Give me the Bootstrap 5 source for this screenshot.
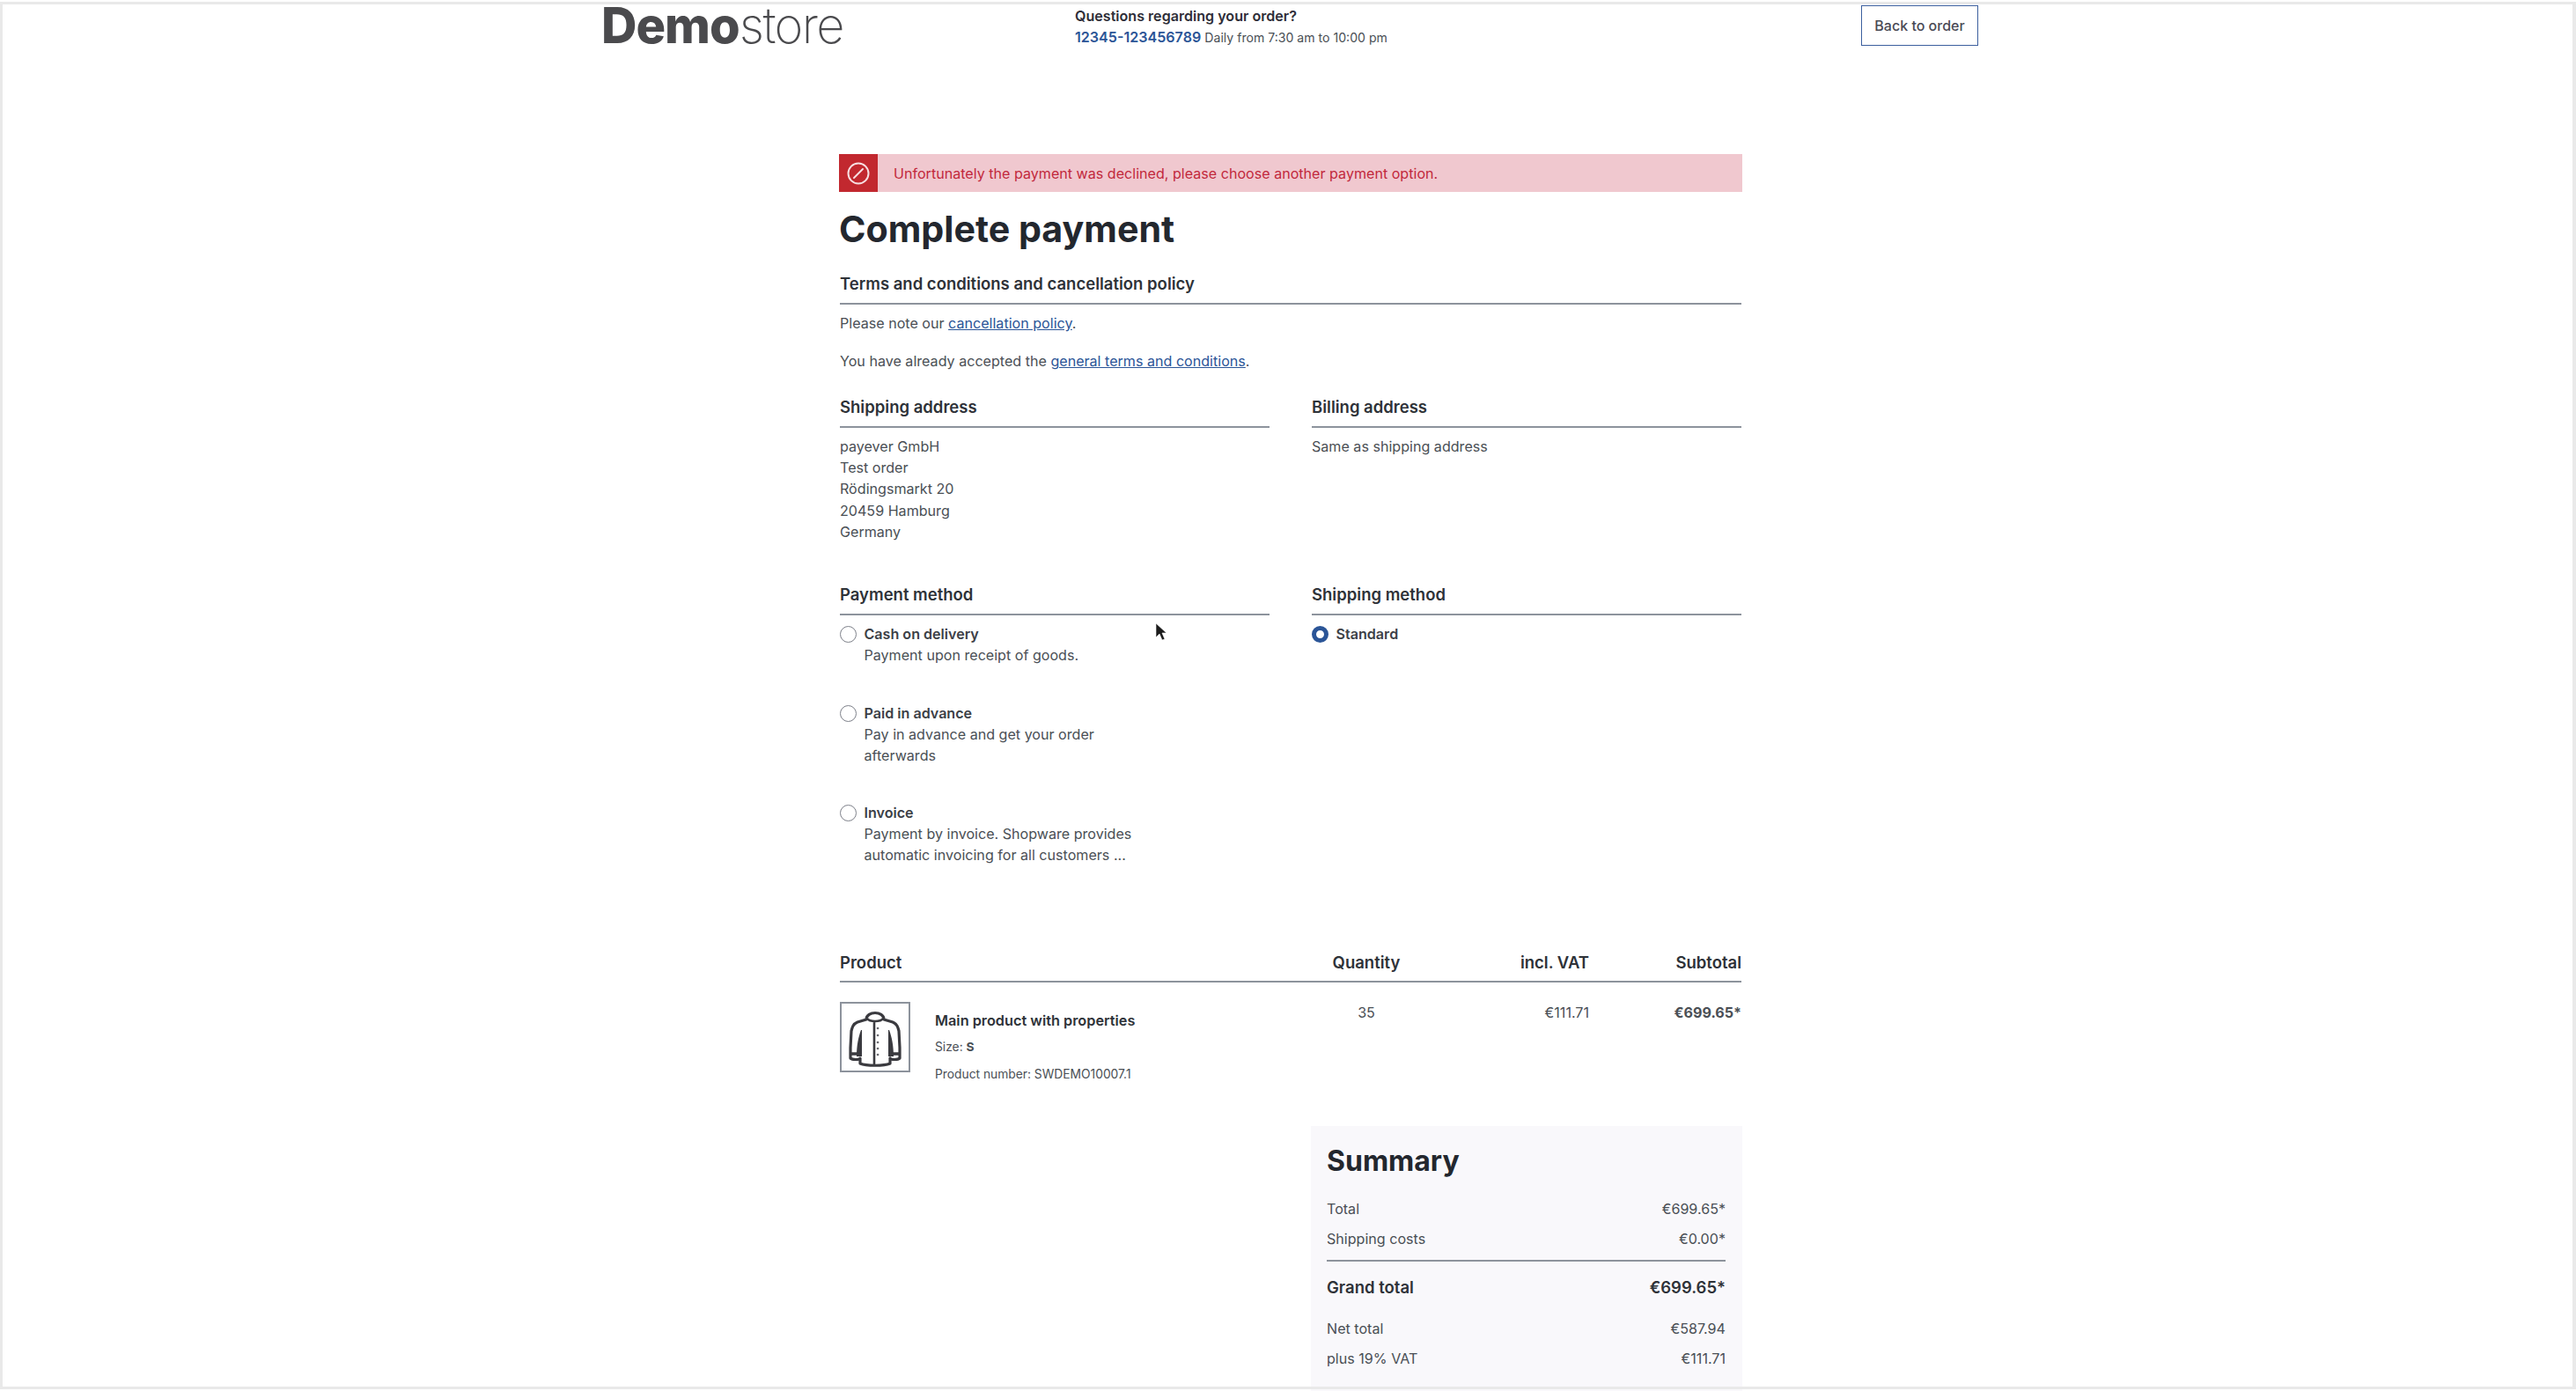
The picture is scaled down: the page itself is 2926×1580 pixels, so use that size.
<!DOCTYPE html>
<html lang="en">
<head>
  <meta charset="UTF-8" />
  <title>Complete payment</title>
  <link href="https://cdn.jsdelivr.net/npm/bootstrap@5.3.0/dist/css/bootstrap.min.css" rel="stylesheet" />
  <style>
    html, body { height: 100%; overflow: hidden; }
    body { font-family: Inter, "Liberation Sans", sans-serif; font-size: 16.1px; line-height: 24px; color: #4a4f55; background: #fff; }
    a { color: #2b5597; }
    .page-frame { position: fixed; inset: 2px 0; border-style: solid; border-color: #e9e9e9; border-width: 3px 4px 3px 3px; pointer-events: none; z-index: 5; }
    .mouse-arrow { position: fixed; left: 1311px; top: 706px; z-index: 6; }
    .shop-head { width: 1564px; margin-left: 683px; height: 175px; padding-top: 6px; }
    .shop-logo { width: 538px; font-size: 56px; line-height: 46px; font-weight: 800; color: #4a4a4d; letter-spacing: -1px; }
    .shop-logo span { font-weight: 200; letter-spacing: -1.6px; }
    .shop-help { line-height: 24px; color: #2e2e38; font-weight: 600; }
    .shop-help small { font-size: 14.1px; font-weight: 400; color: #4a4f55; }
    .shop-help a { text-decoration: none; }
    .back-btn { margin-left: auto; width: 133px; height: 46px; padding: 0; border: 1.5px solid #3b5f9e; border-radius: 0; font-size: 16px; font-weight: 500; color: #4a4a55; background: #fff; }
    .pay-main { width: 1026px; margin-left: 953px; }
    .pay-body { padding: 0 1px; }
    .pay-alert { height: 43px; background: #f0c8cf; color: #c2283c; }
    .pay-alert-icon { width: 44px; background: #c2282f; }
    .pay-alert-text { padding-left: 18px; }
    h1.pay-title { font-size: 41.2px; line-height: 48px; font-weight: 700; color: #23272e; margin: 18px 0 0; }
    .sect-title { font-size: 18.5px; line-height: 24px; font-weight: 600; color: #2e3238; padding-bottom: 10px; border-bottom: 2px solid #8d939c; margin-bottom: 9px; }
    .pay-body p { margin-bottom: 19px; }
    .terms-block { padding-top: 26px; }
    .two-cols { display: grid; grid-template-columns: 488px 488px; column-gap: 48px; margin-top: 28px; }
    .addr-lines { margin-bottom: 47px; line-height: 24.2px; }
    .radio-dot { width: 19px; height: 19px; flex: none; border: 1.5px solid #7d8089; border-radius: 50%; margin-top: 3px; background: #fff; }
    .radio-dot.is-on { border: 5px solid #2b5597; }
    .radio-row { gap: 8.5px; margin-bottom: 41.5px; }
    .radio-row strong { font-weight: 600; color: #3c4046; display: block; }
    .radio-desc { width: 325px; }
    .items-head { margin-top: 56px; padding-bottom: 9px; border-bottom: 2px solid #8d939c; font-size: 18.5px; font-weight: 600; color: #2e3238; }
    .item-row { padding-top: 22px; }
    .col-product { width: 553px; flex: none; }
    .col-qty { width: 90px; flex: none; text-align: center; }
    .col-vat { width: 208px; flex: none; text-align: right; }
    .col-sub { flex: 1; text-align: right; }
    .thumb-box { width: 80px; height: 80px; border: 2px solid #8d939c; flex: none; }
    .thumb-box svg { display: block; width: 76px; height: 76px; }
    .item-info { margin-left: 28px; padding-top: 6px; padding-bottom: 2px; font-size: 13.8px; line-height: 30.5px; }
    .item-info strong { font-size: 16.3px; font-weight: 600; color: #2e3238; display: block; }
    .sum-box { width: 490px; margin-left: 535px; margin-top: 42px; padding: 16px 19px 60px 18px; background: #f9f8fb; }
    .sum-box h2 { font-size: 32px; line-height: 48px; font-weight: 700; color: #23272e; margin: 0 0 18px; }
    .sum-row { height: 33.5px; }
    .sum-grand { font-size: 18.5px; font-weight: 600; color: #2e3238; border-top: 2px solid #8d939c; padding-top: 17px; margin-top: 3px; margin-bottom: 20px; height: 46px; }
  </style>
</head>
<body>
  <div class="page-frame"></div>
  <svg class="mouse-arrow" width="16" height="24" viewBox="0 0 16 24"><path d="M2 2v16l4-4 3 7 3-1-3-7h5z" fill="#1c1c1c" stroke="#fff" stroke-width=".6"/></svg>

  <header class="shop-head d-flex align-items-start">
    <div class="shop-logo">Demo<span>store</span></div>
    <div class="shop-help">
      <div>Questions regarding your order?</div>
      <div><a href="#">12345-123456789</a> <small>Daily from 7:30 am to 10:00 pm</small></div>
    </div>
    <button class="btn back-btn" type="button">Back to order</button>
  </header>

  <main class="pay-main">
    <div class="pay-alert d-flex align-items-stretch">
      <div class="pay-alert-icon d-flex align-items-center justify-content-center">
        <svg width="26" height="26" viewBox="0 0 26 26" fill="none" stroke="#f7dfe2" stroke-width="2"><circle cx="13" cy="13" r="11.5"/><path d="M8 18 18 8" stroke-linecap="round"/></svg>
      </div>
      <div class="pay-alert-text d-flex align-items-center">Unfortunately the payment was declined, please choose another payment option.</div>
    </div>

    <h1 class="pay-title">Complete payment</h1>

    <div class="pay-body">
      <div class="terms-block">
        <div class="sect-title">Terms and conditions and cancellation policy</div>
        <p>Please note our <a href="#">cancellation policy</a>.</p>
        <p>You have already accepted the <a href="#">general terms and conditions</a>.</p>
      </div>

      <div class="two-cols">
        <div>
          <div class="sect-title">Shipping address</div>
          <div class="addr-lines">payever GmbH<br />Test order<br />Rödingsmarkt 20<br />20459 Hamburg<br />Germany</div>
        </div>
        <div>
          <div class="sect-title">Billing address</div>
          <div>Same as shipping address</div>
        </div>
        <div>
          <div class="sect-title">Payment method</div>
          <div class="radio-row d-flex">
            <span class="radio-dot"></span>
            <div class="radio-desc"><strong>Cash on delivery</strong>Payment upon receipt of goods.</div>
          </div>
          <div class="radio-row d-flex">
            <span class="radio-dot"></span>
            <div class="radio-desc"><strong>Paid in advance</strong>Pay in advance and get your order afterwards</div>
          </div>
          <div class="radio-row d-flex">
            <span class="radio-dot"></span>
            <div class="radio-desc"><strong>Invoice</strong>Payment by invoice. Shopware provides automatic invoicing for all customers ...</div>
          </div>
        </div>
        <div>
          <div class="sect-title">Shipping method</div>
          <div class="radio-row d-flex">
            <span class="radio-dot is-on"></span>
            <div><strong>Standard</strong></div>
          </div>
        </div>
      </div>

      <div class="items-head d-flex">
        <div class="col-product">Product</div>
        <div class="col-qty">Quantity</div>
        <div class="col-vat">incl. VAT</div>
        <div class="col-sub">Subtotal</div>
      </div>
      <div class="item-row d-flex">
        <div class="col-product d-flex">
          <div class="thumb-box">
            <svg viewBox="2 2 76 76" fill="none" stroke="#3a3a3f" stroke-width="3.2" stroke-linejoin="round">
              <path d="M30 20C30 10 50 10 50 20L60 23C65 25 66 29 67 33L68 52V64C66 66 58 66 57 64V70C50 73 30 73 23 70V64C22 66 14 66 12 64V52L13 33C14 29 15 25 20 23Z"/>
              <path d="M31 19C34 23 46 23 49 19M39 21V71" stroke-width="2.6"/>
              <path d="M12 59H23M57 59H68" stroke-width="3.5"/>
              <path d="M24 32C21 40 19 50 19 62H25V32ZM56 32C59 40 61 50 61 62H55V32Z" fill="#3a3a3f" stroke="none"/>
              <path d="M43 30h.1M43 38h.1M43 46h.1M43 53h.1M43 60h.1" stroke="#6a6a70" stroke-width="2.6" stroke-linecap="round"/>
            </svg>
          </div>
          <div class="item-info">
            <strong>Main product with properties</strong>
            <div>Size: <b>S</b></div>
            <div>Product number: SWDEMO10007.1</div>
          </div>
        </div>
        <div class="col-qty">35</div>
        <div class="col-vat">€111.71</div>
        <div class="col-sub fw-bold">€699.65*</div>
      </div>

      <section class="sum-box">
        <h2>Summary</h2>
        <div class="sum-row d-flex justify-content-between"><span>Total</span><span>€699.65*</span></div>
        <div class="sum-row d-flex justify-content-between"><span>Shipping costs</span><span>€0.00*</span></div>
        <div class="sum-grand d-flex justify-content-between"><span>Grand total</span><span>€699.65*</span></div>
        <div class="sum-row d-flex justify-content-between"><span>Net total</span><span>€587.94</span></div>
        <div class="sum-row d-flex justify-content-between"><span>plus 19% VAT</span><span>€111.71</span></div>
      </section>
    </div>
  </main>

  <script src="https://cdn.jsdelivr.net/npm/bootstrap@5.3.0/dist/js/bootstrap.bundle.min.js"></script>
</body>
</html>
